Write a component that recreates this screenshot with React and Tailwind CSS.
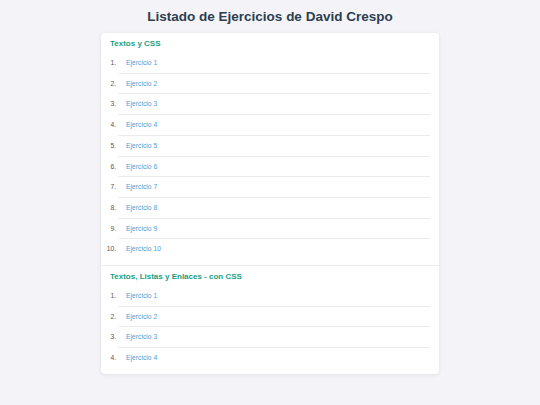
import React from "react";

const sections = [
  { title: "Textos y CSS", count: 10 },
  { title: "Textos, Listas y Enlaces - con CSS", count: 4 },
];

const Section = ({ title, count, last }) => (
  <div className={`px-[9px] pt-[6px] pb-[6px] ${last ? "" : "border-b border-[#ececf0]"}`}>
    <h2 className="text-[8px] leading-[10px] font-bold text-[#1b9e83]">{title}</h2>
    <ol className="list-decimal list-outside pl-[8px] mt-[4px]">
      {Array.from({ length: count }, (_, i) => (
        <li
          key={i}
          className="pl-[8px] py-[6px] leading-[7.7px] text-[6.75px] text-[#555] border-b border-[#ebebeb] last:border-b-0"
        >
          <a href="#" className="text-[#4a9fd8]">
            Ejercicio {i + 1}
          </a>
        </li>
      ))}
    </ol>
  </div>
);

export default function App() {
  return (
    <div
      className="min-h-[405px] bg-[#f4f4f8] pt-[8px]"
      style={{ fontFamily: '"Liberation Sans", Arial, sans-serif' }}
    >
      <h1 className="text-center text-[13.5px] leading-[17px] font-bold text-[#2c3e50]">
        Listado de Ejercicios de David Crespo
      </h1>
      <div className="mx-auto mt-[8px] w-[338px] bg-white rounded-[4px] shadow-[0_1px_4px_rgba(0,0,0,0.08)]">
        {sections.map((s, i) => (
          <Section key={s.title} title={s.title} count={s.count} last={i === sections.length - 1} />
        ))}
      </div>
    </div>
  );
}
